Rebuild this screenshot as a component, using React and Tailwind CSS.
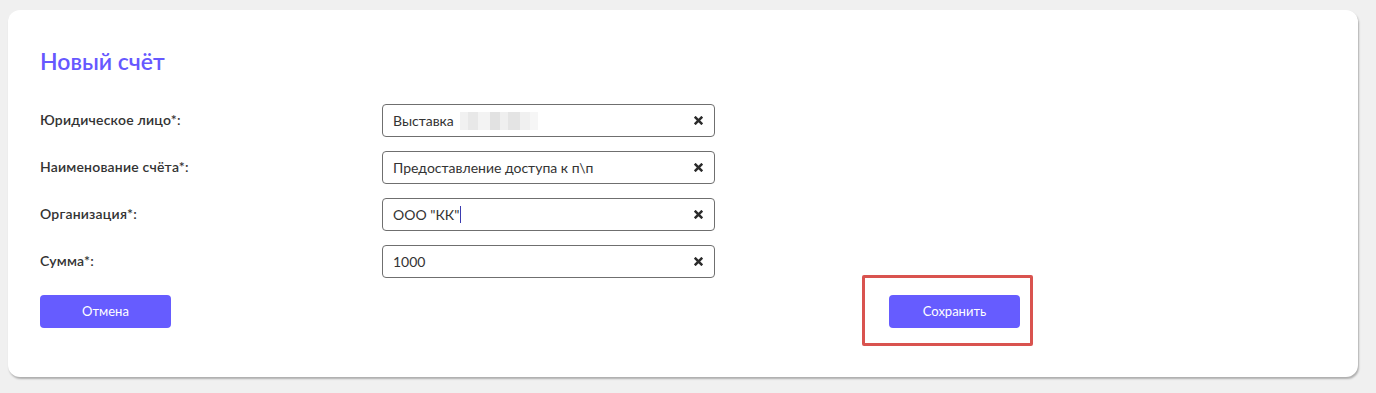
const fields = [
  { label: 'Юридическое лицо*:', value: 'Выставка', blurred: true },
  { label: 'Наименование счёта*:', value: 'Предоставление доступа к п\\п' },
  { label: 'Организация*:', value: 'ООО "КК"', caret: true },
  { label: 'Сумма*:', value: '1000' },
]

function ClearIcon() {
  return (
    <svg width="9" height="9" viewBox="0 0 10 10" className="text-[#2b2b2b]">
      <path d="M1.8 1.8 L8.2 8.2 M8.2 1.8 L1.8 8.2" stroke="currentColor" strokeWidth="2.8" strokeLinecap="square" />
    </svg>
  )
}

function Blur() {
  return (
    <span className="ml-1.5 inline-flex h-[18px] items-stretch">
      <span className="w-[8px] bg-[#f1f1f1]" />
      <span className="w-[10px] bg-[#e8e8e8]" />
      <span className="w-[12px] bg-[#f3f3f3]" />
      <span className="w-[10px] bg-[#e2e2e2]" />
      <span className="w-[8px] bg-[#efefef]" />
      <span className="w-[12px] bg-[#e4e4e4]" />
      <span className="w-[10px] bg-[#f0f0f0]" />
      <span className="w-[8px] bg-[#f6f6f6]" />
    </span>
  )
}

export default function App() {
  return (
    <div
      className="min-h-screen bg-[#f0f0f0] pl-2 pr-[18px] pt-2.5 pb-4"
      style={{ fontFamily: 'Lato, "Open Sans", sans-serif' }}
    >
      <div className="rounded-xl bg-white px-8 pt-[37px] pb-[49px] shadow-[1px_2px_2px_rgba(0,0,0,0.28)]">
        <h1 className="text-[23px] font-semibold leading-7 text-[#6658ff]">Новый счёт</h1>

        <div className="mt-[29px] flex flex-col gap-[14px]">
          {fields.map((f) => (
            <div key={f.label} className="flex items-start">
              <div className="w-[342px] pt-[6px] text-[14px] font-semibold leading-5 tracking-[0.2px] text-[#333]">
                {f.label}
              </div>
              <div className="flex h-[33px] w-[333px] items-center justify-between rounded-[4px] border border-[#6f6f6f] pr-[11px] pl-[10px]">
                <span className="flex items-center text-[14px] leading-5 text-[#333]">
                  {f.value}
                  {f.blurred && <Blur />}
                  {f.caret && <span className="ml-[1px] h-[17px] w-px bg-[#3b3bb0]" />}
                </span>
                <ClearIcon />
              </div>
            </div>
          ))}
        </div>

        <div className="mt-[17px] flex items-start">
          <button className="h-[33px] w-[131px] rounded-[4px] bg-[#665cff] text-[13px] text-white">
            Отмена
          </button>
          <div className="relative ml-[718px]">
            <button className="h-[33px] w-[131px] rounded-[4px] bg-[#665cff] text-[13px] text-white">
              Сохранить
            </button>
            <div className="absolute -top-[20px] -left-[27px] h-[71px] w-[171px] rounded-[2px] border-[3px] border-[#d9534f]" />
          </div>
        </div>
      </div>
    </div>
  )
}
